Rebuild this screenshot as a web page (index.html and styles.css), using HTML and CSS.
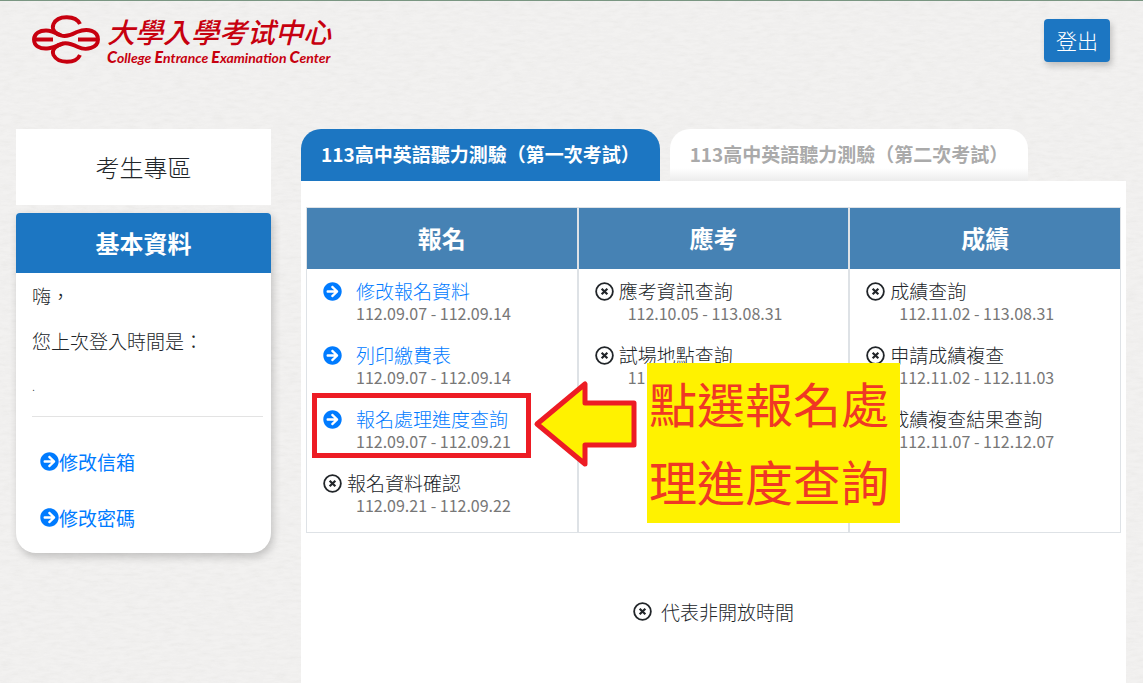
FILE: index.html
```html
<!DOCTYPE html>
<html lang="zh-Hant">
<head>
<meta charset="utf-8">
<meta name="viewport" content="width=device-width, initial-scale=1">
<title>大學入學考試中心</title>
<link rel="stylesheet" href="styles.css">
</head>
<body>
<svg class="symbols" aria-hidden="true">
  <symbol id="arrow-circle" viewBox="0 0 512 512"><path fill="currentColor" d="M256 8c137 0 248 111 248 248S393 504 256 504 8 393 8 256 119 8 256 8zm-28.900 143.600l75.500 72.400H120c-13.300 0-24 10.700-24 24v16c0 13.300 10.700 24 24 24h182.600l-75.500 72.400c-9.700 9.300-9.900 24.800-.4 34.300l11 10.900c9.400 9.400 24.600 9.400 33.900 0L404.300 273c9.400-9.400 9.400-24.600 0-33.900L271.600 106.300c-9.400-9.400-24.600-9.400-33.900 0l-11 10.900c-9.500 9.600-9.300 25.100.4 34.400z"/></symbol>
  <symbol id="times-circle" viewBox="0 0 20 20"><circle cx="10" cy="10" r="8.800" fill="none" stroke="currentColor" stroke-width="1.900"/><path d="M7 7l6 6M13 7l-6 6" fill="none" stroke="currentColor" stroke-width="2.300"/></symbol>
</svg>

<header class="site-header">
  <a class="brand" href="#">
    <svg class="brand-mark" viewBox="0 0 68 49" aria-hidden="true">
      <g fill="none" stroke="currentColor" stroke-width="3.900">
        <path d="M48 9C44 .5 26 -.5 21.500 9C19 15 24 19 29 20.500C36 22.500 41 19 45 17C56 12.500 66 16 66 24.500C66 33 54 36 46 32C40 29 36 27.500 31 28.500C25 30 19 34 21.500 40C26 49 44 49 48 40"/>
        <path d="M29 20.500C24 18 20 15.500 14 15.500C8 15.500 2 18 2 24.500C2 31 8 34 15 33.500C20 33.500 24 31 31 28.500"/>
        <path d="M4 24.500H21M46 24.500H64"/>
      </g>
    </svg>
    <span class="brand-text">
      <span class="brand-zh">大學入學考试中心</span>
      <span class="brand-en"><b>C</b>ollege <b>E</b>ntrance <b>E</b>xamination <b>C</b>enter</span>
    </span>
  </a>
  <button class="logout" type="button">登出</button>
</header>

<div class="layout">
  <aside class="sidebar">
    <h1 class="area-title">考生專區</h1>
    <section class="profile">
      <h2 class="profile-title">基本資料</h2>
      <div class="profile-body">
        <p>嗨，</p>
        <p>您上次登入時間是：</p>
        <p class="login-time">.</p>
        <hr class="rule">
        <nav class="profile-links">
          <a href="#"><svg class="icon"><use href="#arrow-circle"/></svg>修改信箱</a>
          <a href="#"><svg class="icon"><use href="#arrow-circle"/></svg>修改密碼</a>
        </nav>
      </div>
    </section>
  </aside>

  <main class="content">
    <div class="tabs" role="tablist">
      <button class="tab tab-active" type="button" role="tab" aria-selected="true">113高中英語聽力測驗（第一次考試）</button>
      <button class="tab" type="button" role="tab" aria-selected="false">113高中英語聽力測驗（第二次考試）</button>
    </div>
    <div class="panel" role="tabpanel">
      <div class="stages">
        <section class="stage">
          <h2 class="stage-title">報名</h2>
          <ul class="items">
            <li class="item"><a class="item-name open" href="#"><svg class="icon"><use href="#arrow-circle"/></svg>修改報名資料</a><span class="dates">112.09.07 - 112.09.14</span></li>
            <li class="item"><a class="item-name open" href="#"><svg class="icon"><use href="#arrow-circle"/></svg>列印繳費表</a><span class="dates">112.09.07 - 112.09.14</span></li>
            <li class="item marked"><a class="item-name open" href="#"><svg class="icon"><use href="#arrow-circle"/></svg>報名處理進度查詢</a><span class="dates">112.09.07 - 112.09.21</span></li>
            <li class="item"><span class="item-name"><svg class="icon"><use href="#times-circle"/></svg>報名資料確認</span><span class="dates">112.09.21 - 112.09.22</span></li>
          </ul>
        </section>
        <section class="stage">
          <h2 class="stage-title">應考</h2>
          <ul class="items">
            <li class="item"><span class="item-name"><svg class="icon"><use href="#times-circle"/></svg>應考資訊查詢</span><span class="dates">112.10.05 - 113.08.31</span></li>
            <li class="item"><span class="item-name"><svg class="icon"><use href="#times-circle"/></svg>試場地點查詢</span><span class="dates">11</span></li>
          </ul>
        </section>
        <section class="stage">
          <h2 class="stage-title">成績</h2>
          <ul class="items">
            <li class="item"><span class="item-name"><svg class="icon"><use href="#times-circle"/></svg>成績查詢</span><span class="dates">112.11.02 - 113.08.31</span></li>
            <li class="item"><span class="item-name"><svg class="icon"><use href="#times-circle"/></svg>申請成績複查</span><span class="dates">112.11.02 - 112.11.03</span></li>
            <li class="item"><span class="item-name"><svg class="icon"><use href="#times-circle"/></svg>成績複查結果查詢</span><span class="dates">112.11.07 - 112.12.07</span></li>
          </ul>
        </section>
      </div>
      <p class="legend"><svg class="icon"><use href="#times-circle"/></svg>代表非開放時間</p>

      <svg class="pointer" viewBox="0 0 106 90" aria-hidden="true"><path d="M5 45L53 5V24H102V66H53V85Z" fill="#fff200" stroke="#ed1c24" stroke-width="5" stroke-linejoin="round"/></svg>
      <p class="callout">點選報名處理進度查詢</p>
    </div>
  </main>
</div>
</body>
</html>
```
FILE: styles.css
```css
*,
*::after {
  box-sizing: border-box;
}

body {
  margin: 0;
  min-height: 100vh;
  display: flex;
  flex-direction: column;
  border-top: 1px solid #7a9682;
  font-family: "Noto Sans CJK TC", "Liberation Sans", sans-serif;
  font-size: 19px;
  font-weight: 300;
  line-height: 29px;
  color: #212529;
  background-color: #f2f1f0;
  background-image: url("data:image/svg+xml,%3Csvg xmlns='http://www.w3.org/2000/svg' width='400' height='400'%3E%3Cfilter id='n' x='0' y='0' width='100%25' height='100%25'%3E%3CfeTurbulence type='fractalNoise' baseFrequency='.08 .3' numOctaves='4' stitchTiles='stitch'/%3E%3CfeColorMatrix values='0 0 0 0 .5 0 0 0 0 .5 0 0 0 0 .48 .2 0 0 0 -.07'/%3E%3C/filter%3E%3Crect width='400' height='400' filter='url(%23n)'/%3E%3C/svg%3E");
}

h1,
h2,
p,
ul {
  margin: 0;
  padding: 0;
}

a {
  color: #007bff;
  text-decoration: none;
}

button {
  border: 0;
  font-family: inherit;
  cursor: pointer;
}

.symbols {
  position: absolute;
  width: 0;
  height: 0;
}

.icon {
  flex: none;
  width: 19px;
  height: 19px;
}

.site-header {
  display: flex;
  justify-content: space-between;
  align-items: flex-start;
  padding: 14px 33px 0 32px;
  height: 128px;
}

.brand {
  display: flex;
  gap: 7px;
  color: #c7000f;
}

.brand-mark {
  width: 68px;
  height: 49px;
}

.brand-text {
  display: flex;
  flex-direction: column;
  white-space: nowrap;
}

.brand-zh {
  font-size: 28px;
  font-weight: 500;
  font-style: italic;
  line-height: 32px;
}

.brand-en {
  font-family: Lato, sans-serif;
  font-size: 14px;
  font-weight: 700;
  font-style: italic;
  line-height: 20px;
}

.brand-en b {
  font-size: 16px;
}

.logout {
  margin-top: 4px;
  padding: 7px 12px;
  border-radius: 4px;
  font-size: 21px;
  font-weight: 300;
  line-height: 29px;
  color: #fff;
  background: #1c76c2;
  box-shadow: 2px 4px 6px rgba(0, 0, 0, 0.2);
}

.layout {
  flex: 1;
  display: grid;
  grid-template-columns: 255px minmax(0, 1fr);
  gap: 30px;
  padding: 0 17px 0 16px;
}

.sidebar {
  display: flex;
  flex-direction: column;
  gap: 8px;
}

.area-title {
  padding: 20px;
  font-size: 24px;
  font-weight: 300;
  line-height: 36px;
  text-align: center;
  background: #fff;
}

.profile {
  border-radius: 4px 4px 20px 20px;
  background: #fff;
  box-shadow: 2px 4px 8px rgba(0, 0, 0, 0.2);
}

.profile-title {
  padding: 12px;
  border-radius: 4px 4px 0 0;
  font-size: 24px;
  font-weight: 700;
  line-height: 36px;
  text-align: center;
  color: #fff;
  background: #1c76c2;
}

.profile-body {
  padding: 8px 8px 21px 16px;
}

.profile-body p {
  margin-bottom: 16px;
}

.profile-body .login-time {
  font-size: 12px;
}

.rule {
  height: 1px;
  margin: 0 0 30px;
  border: 0;
  background: #e3e3e3;
}

.profile-links {
  display: grid;
  gap: 27px;
  padding-left: 8px;
  font-weight: 400;
}

.profile-links a {
  display: flex;
  align-items: center;
}

.content {
  display: flex;
  flex-direction: column;
}

.tabs {
  display: flex;
  gap: 10px;
}

.tab {
  padding: 10px 20px 13px;
  border-radius: 20px 20px 0 0;
  font-size: 19px;
  font-weight: 700;
  line-height: 29px;
  white-space: nowrap;
  color: #aaa;
  background: linear-gradient(#fff 75%, #ececec);
}

.tab-active {
  color: #fff;
  background: #1c76c2;
}

.panel {
  position: relative;
  flex: 1;
  padding: 26px 5px;
  background: #fff;
}

.stages {
  display: grid;
  grid-template-columns: repeat(3, minmax(0, 1fr));
}

.stage {
  border: 1px solid #dee2e6;
}

.stage-title {
  padding: 11px 12px 13px;
  font-size: 24px;
  font-weight: 700;
  line-height: 37px;
  text-align: center;
  color: #fff;
  background: #4682b4;
}

.items {
  display: grid;
  gap: 19px;
  padding: 10px 16px 16px;
  list-style: none;
}

.item {
  position: relative;
}

.item-name {
  display: flex;
  align-items: center;
  gap: 5px;
  line-height: 24px;
}

.open {
  gap: 14px;
}

.dates {
  display: block;
  padding-left: 33px;
  font-size: 16px;
  font-weight: 400;
  line-height: 21px;
  color: #777;
}

.marked::after {
  content: "";
  position: absolute;
  top: -14px;
  left: -11px;
  width: 219px;
  height: 65px;
  border: 5px solid #ed1c24;
  pointer-events: none;
}

.legend {
  display: flex;
  justify-content: center;
  align-items: center;
  gap: 9px;
  margin-top: 64px;
}

.pointer {
  position: absolute;
  top: 198px;
  left: 231px;
  width: 106px;
  height: 90px;
}

.callout {
  position: absolute;
  top: 182px;
  left: 346px;
  width: 253px;
  padding: 0 6px 4px 2px;
  font-size: 48px;
  font-weight: 400;
  line-height: 78px;
  color: #f03824;
  background: #fff200;
}
```
